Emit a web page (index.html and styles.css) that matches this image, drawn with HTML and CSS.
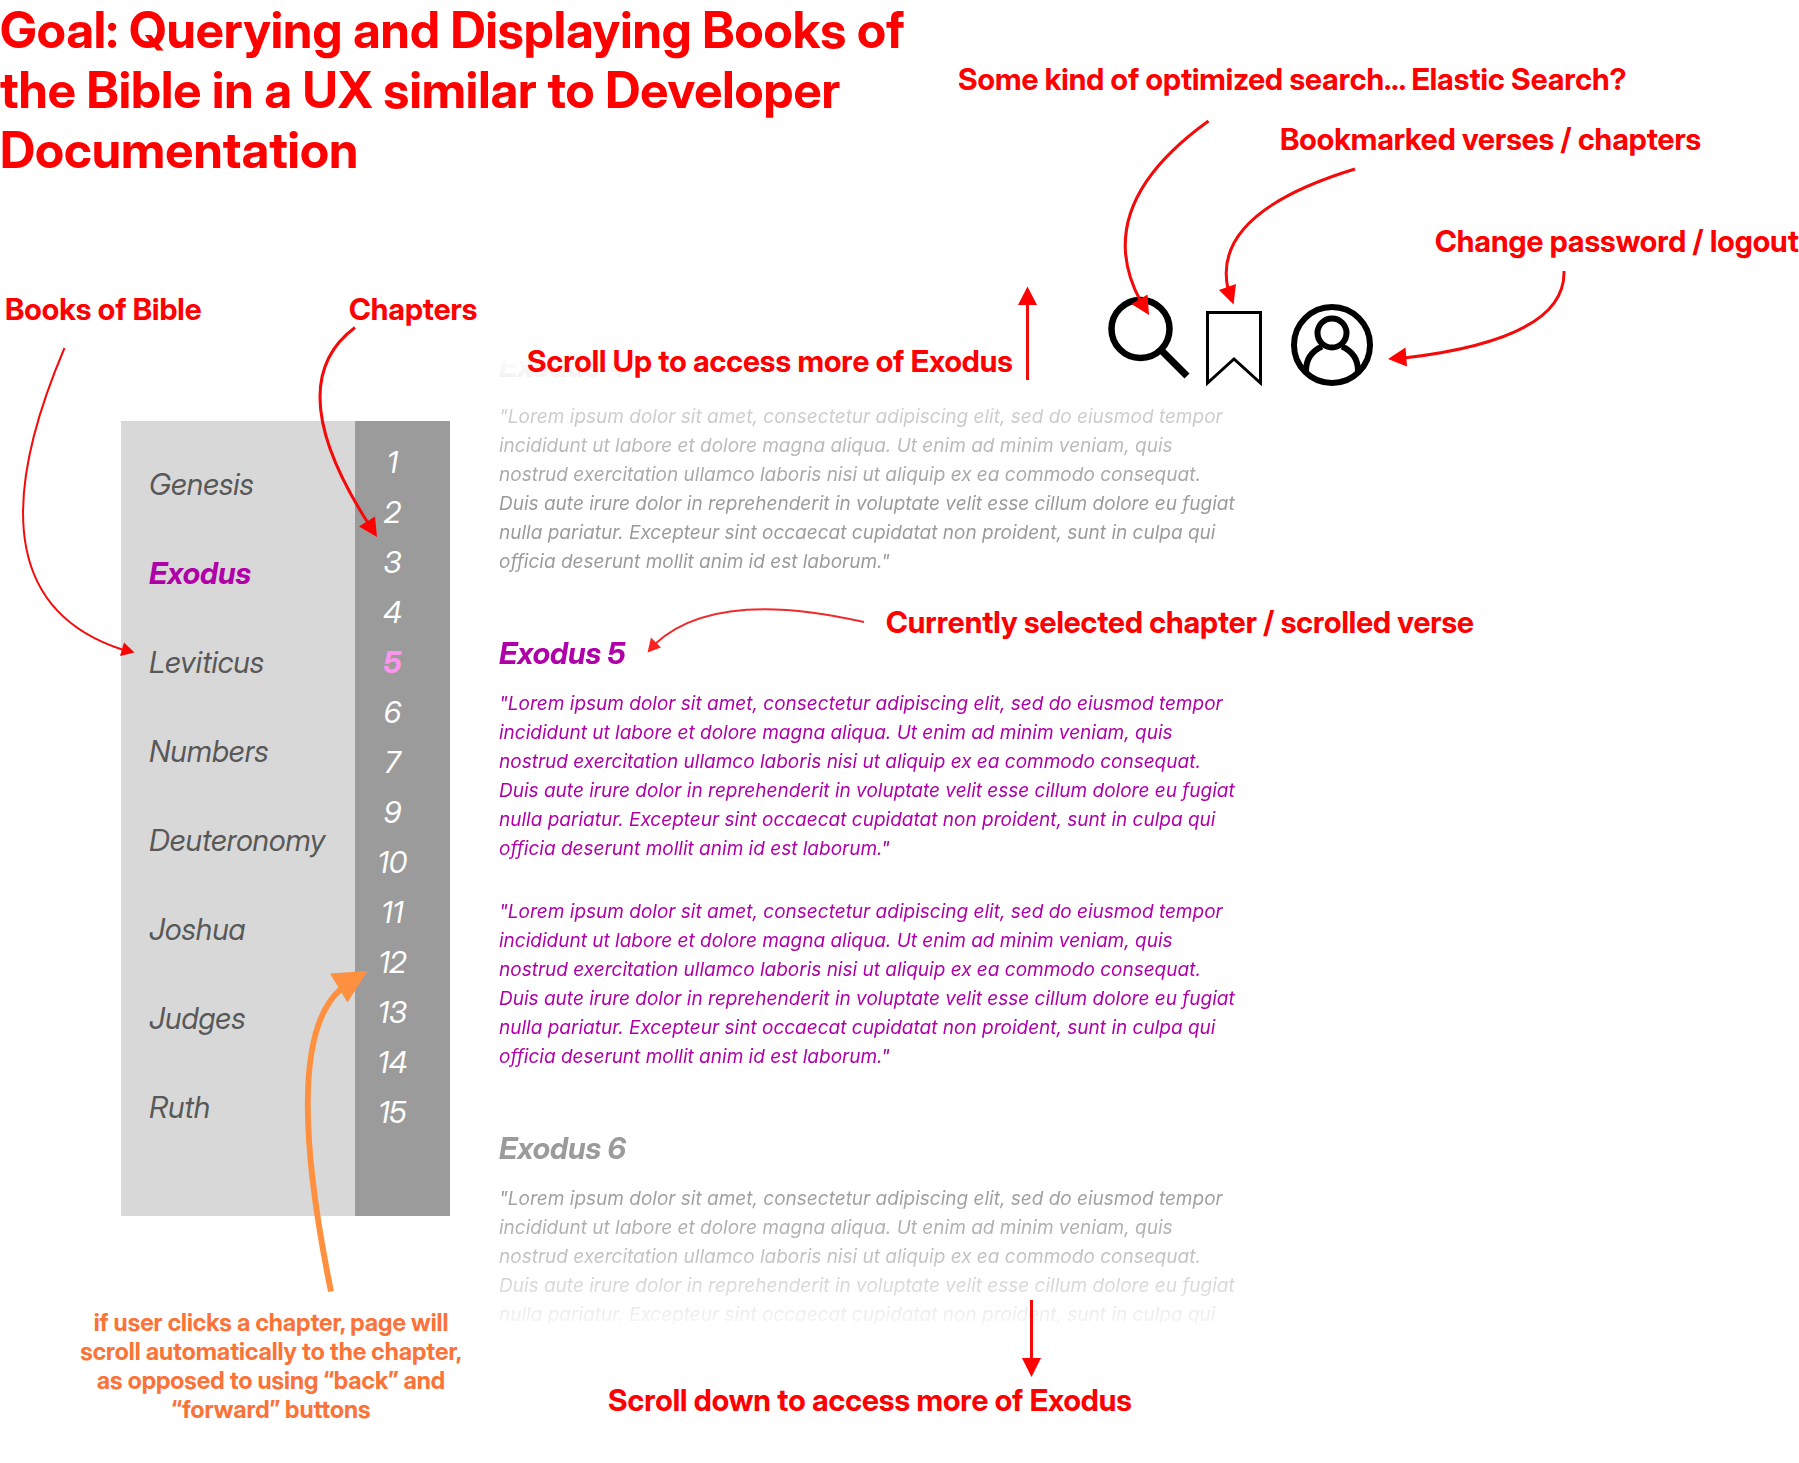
FILE: index.html
```html
<!DOCTYPE html>
<html lang="en">
<head>
  <meta charset="utf-8">
  <meta name="viewport" content="width=device-width, initial-scale=1">
  <title>Bible reader wireframe</title>
  <link rel="stylesheet" href="styles.css">
</head>
<body>
  <div class="board">
    <header class="goal">
      <h1>Goal: Querying and Displaying Books of the Bible in a UX similar to Developer Documentation</h1>
    </header>

    <main class="reader">
      <div class="sidebar">
        <nav class="books" aria-label="Books">
          <a href="#genesis">Genesis</a>
          <a href="#exodus" class="current" aria-current="true">Exodus</a>
          <a href="#leviticus">Leviticus</a>
          <a href="#numbers">Numbers</a>
          <a href="#deuteronomy">Deuteronomy</a>
          <a href="#joshua">Joshua</a>
          <a href="#judges">Judges</a>
          <a href="#ruth">Ruth</a>
        </nav>
        <nav class="chapters" aria-label="Chapters">
          <a href="#c1">1</a>
          <a href="#c2">2</a>
          <a href="#c3">3</a>
          <a href="#c4">4</a>
          <a href="#c5" class="current" aria-current="true">5</a>
          <a href="#c6">6</a>
          <a href="#c7">7</a>
          <a href="#c9">9</a>
          <a href="#c10">10</a>
          <a href="#c11">11</a>
          <a href="#c12">12</a>
          <a href="#c13">13</a>
          <a href="#c14">14</a>
          <a href="#c15">15</a>
        </nav>
      </div>

      <article class="text">
        <section class="chapter" id="c4">
          <h2>Exodus 4</h2>
          <p>"Lorem ipsum dolor sit amet, consectetur adipiscing elit, sed do eiusmod tempor incididunt ut labore et dolore magna aliqua. Ut enim ad minim veniam, quis nostrud exercitation ullamco laboris nisi ut aliquip ex ea commodo consequat. Duis aute irure dolor in reprehenderit in voluptate velit esse cillum dolore eu fugiat nulla pariatur. Excepteur sint occaecat cupidatat non proident, sunt in culpa qui officia deserunt mollit anim id est laborum."</p>
        </section>
        <section class="chapter selected" id="c5">
          <h2>Exodus 5</h2>
          <p>"Lorem ipsum dolor sit amet, consectetur adipiscing elit, sed do eiusmod tempor incididunt ut labore et dolore magna aliqua. Ut enim ad minim veniam, quis nostrud exercitation ullamco laboris nisi ut aliquip ex ea commodo consequat. Duis aute irure dolor in reprehenderit in voluptate velit esse cillum dolore eu fugiat nulla pariatur. Excepteur sint occaecat cupidatat non proident, sunt in culpa qui officia deserunt mollit anim id est laborum."</p>
          <p>"Lorem ipsum dolor sit amet, consectetur adipiscing elit, sed do eiusmod tempor incididunt ut labore et dolore magna aliqua. Ut enim ad minim veniam, quis nostrud exercitation ullamco laboris nisi ut aliquip ex ea commodo consequat. Duis aute irure dolor in reprehenderit in voluptate velit esse cillum dolore eu fugiat nulla pariatur. Excepteur sint occaecat cupidatat non proident, sunt in culpa qui officia deserunt mollit anim id est laborum."</p>
        </section>
        <section class="chapter" id="c6">
          <h2>Exodus 6</h2>
          <p>"Lorem ipsum dolor sit amet, consectetur adipiscing elit, sed do eiusmod tempor incididunt ut labore et dolore magna aliqua. Ut enim ad minim veniam, quis nostrud exercitation ullamco laboris nisi ut aliquip ex ea commodo consequat. Duis aute irure dolor in reprehenderit in voluptate velit esse cillum dolore eu fugiat nulla pariatur. Excepteur sint occaecat cupidatat non proident, sunt in culpa qui officia deserunt mollit anim id est laborum."</p>
        </section>
      </article>

      <div class="tools">
        <button type="button" aria-label="Search">
          <svg width="82" height="90" viewBox="0 0 82 90">
            <circle cx="32.500" cy="33" r="29" fill="none" stroke="#000" stroke-width="6.500"/>
            <path d="M53 54L79 80" stroke="#000" stroke-width="7"/>
          </svg>
        </button>
        <button type="button" aria-label="Bookmarks">
          <svg width="69" height="90" viewBox="0 0 69 90">
            <path d="M1.500 16.500H54.500V87L28 63L1.500 87Z" fill="none" stroke="#000" stroke-width="3"/>
          </svg>
        </button>
        <button type="button" aria-label="Account">
          <svg width="82" height="90" viewBox="0 0 82 90">
            <g fill="none" stroke="#000" stroke-width="6">
              <circle cx="41" cy="49" r="38"/>
              <circle cx="41" cy="37" r="14.500"/>
              <path d="M15 75C15 63 21 55 31 50.500M67 75C67 63 61 55 51 50.500"/>
            </g>
          </svg>
        </button>
      </div>
    </main>

    <div class="note note-search">Some kind of optimized search... Elastic Search?</div>
    <div class="note note-bookmark">Bookmarked verses / chapters</div>
    <div class="note note-account">Change password / logout</div>
    <div class="note note-books">Books of Bible</div>
    <div class="note note-chapters">Chapters</div>
    <div class="note note-up">Scroll Up to access more of Exodus</div>
    <div class="note note-selected">Currently selected chapter / scrolled verse</div>
    <div class="note note-down">Scroll down to access more of Exodus</div>
    <div class="note note-click">if user clicks a chapter, page will scroll automatically to the chapter, as opposed to using “back” and “forward” buttons</div>

    <svg class="arrows" width="1799" height="1463" viewBox="0 0 1799 1463" aria-hidden="true">
      <g fill="none" stroke="#f50a0a" stroke-width="3">
        <path d="M1208.500 121Q1089 207 1141 302"/>
        <path d="M1355 169Q1211 213 1228 289"/>
        <path d="M1564 271Q1566 339 1404 358"/>
        <path d="M1027.500 380V303"/>
        <path d="M1031.500 1300V1360"/>
        <path d="M355 327.500Q279 384 368 523"/>
        <path d="M64.500 348Q-41 596 122 649.500" stroke-width="2"/>
        <path d="M864 622Q715 588 655 644" stroke="#f02a2a" stroke-width="2"/>
        <path d="M331 1291.500Q280 1041 341 989" stroke="#ff9040" stroke-width="6"/>
      </g>
      <g fill="#f00">
        <path d="M1149 315L1131.500 304L1147.500 294.500Z"/>
        <path d="M1233.500 304.500L1219 290L1236 284Z"/>
        <path d="M1388 359L1405.500 347.500L1407 366.500Z"/>
        <path d="M1027.500 286.500L1037 305H1018Z"/>
        <path d="M1031.500 1377L1022 1358H1041Z"/>
        <path d="M377 537L375 516.500L359 526.500Z"/>
        <path d="M134.500 652.500L124 642.500L120 656Z"/>
        <path d="M647.500 652.500L651 637.500L661 647.500Z" fill="#ff2020"/>
        <path d="M367.500 971L330 973.500L347.500 1002.500Z" fill="#ff9040"/>
      </g>
    </svg>
  </div>
</body>
</html>
```
FILE: styles.css
```css
* {
  box-sizing: border-box;
}

body {
  margin: 0;
  background: #fff;
  font-family: "Inter Display", Inter, "Liberation Sans", sans-serif;
}

h1,
h2,
p {
  margin: 0;
}

a {
  color: inherit;
  text-decoration: none;
}

/* The board is one free canvas: the reader below, the notes on top. */
.board {
  position: relative;
  min-height: 100vh;
  overflow: hidden;
}

.goal {
  max-width: 930px;
}

.goal h1 {
  color: #f00;
  font-size: 50px;
  font-weight: 700;
  line-height: 60px;
}

.reader {
  display: grid;
  grid-template-columns: 329px minmax(0, 1fr);
  column-gap: 49px;
  align-items: start;
  padding: 116px 0 0 121px;
}

.sidebar {
  display: grid;
  grid-template-columns: 234px 95px;
  margin-top: 125px;
  font-size: 30px;
  font-style: italic;
  line-height: 36px;
}

.books {
  display: flex;
  flex-direction: column;
  gap: 53px;
  padding: 45px 0 91px 28px;
  background: #d8d8d8;
  color: #585858;
}

.books .current {
  color: #b000a8;
  font-weight: 700;
}

.chapters {
  display: flex;
  flex-direction: column;
  gap: 14px;
  padding: 23px 20px 0 0;
  background: #9b9b9b;
  color: #fff;
  text-align: center;
}

.chapters .current {
  color: #ff94f0;
  font-weight: 700;
}

.text {
  grid-area: 1 / 2;
  display: flex;
  flex-direction: column;
  gap: 59px;
  max-width: 740px;
  margin-top: 52px;
  color: #9b9b9b;
  font-style: italic;
  -webkit-mask-image: linear-gradient(transparent 8px, rgba(0, 0, 0, 0.15) 32px, rgba(0, 0, 0, 0.5) 68px, #000 150px, #000 840px, rgba(0, 0, 0, 0.65) 902px, transparent 988px);
  mask-image: linear-gradient(transparent 8px, rgba(0, 0, 0, 0.15) 32px, rgba(0, 0, 0, 0.5) 68px, #000 150px, #000 840px, rgba(0, 0, 0, 0.65) 902px, transparent 988px);
}

.chapter h2 {
  margin-bottom: 18px;
  font-size: 30px;
  font-weight: 700;
  line-height: 36px;
}

.chapter p {
  font-family: Inter, "Liberation Sans", sans-serif;
  font-size: 19px;
  line-height: 29px;
}

.chapter p + p {
  margin-top: 34px;
}

.selected {
  color: #b000a8;
}

.tools {
  grid-area: 1 / 2;
  display: flex;
  gap: 16px;
  margin-left: 609px;
}

.tools button {
  padding: 0;
  border: 0;
  background: none;
  cursor: pointer;
}

.tools svg {
  display: block;
}

.note {
  position: absolute;
  color: #f00;
  font-size: 30px;
  font-weight: 700;
  line-height: 36px;
  white-space: nowrap;
}

.note-search {
  left: 958px;
  top: 61px;
}

.note-bookmark {
  left: 1280px;
  top: 121px;
}

.note-account {
  left: 1435px;
  top: 223px;
}

.note-books {
  left: 5px;
  top: 291px;
}

.note-chapters {
  left: 349px;
  top: 291px;
}

.note-up {
  left: 527px;
  top: 343px;
}

.note-selected {
  left: 886px;
  top: 604px;
}

.note-down {
  left: 608px;
  top: 1382px;
}

.note-click {
  left: 76px;
  top: 1308px;
  width: 390px;
  color: #fa7338;
  font-size: 24px;
  line-height: 29px;
  text-align: center;
  white-space: normal;
}

.arrows {
  position: absolute;
  left: 0;
  top: 0;
  pointer-events: none;
}
```
